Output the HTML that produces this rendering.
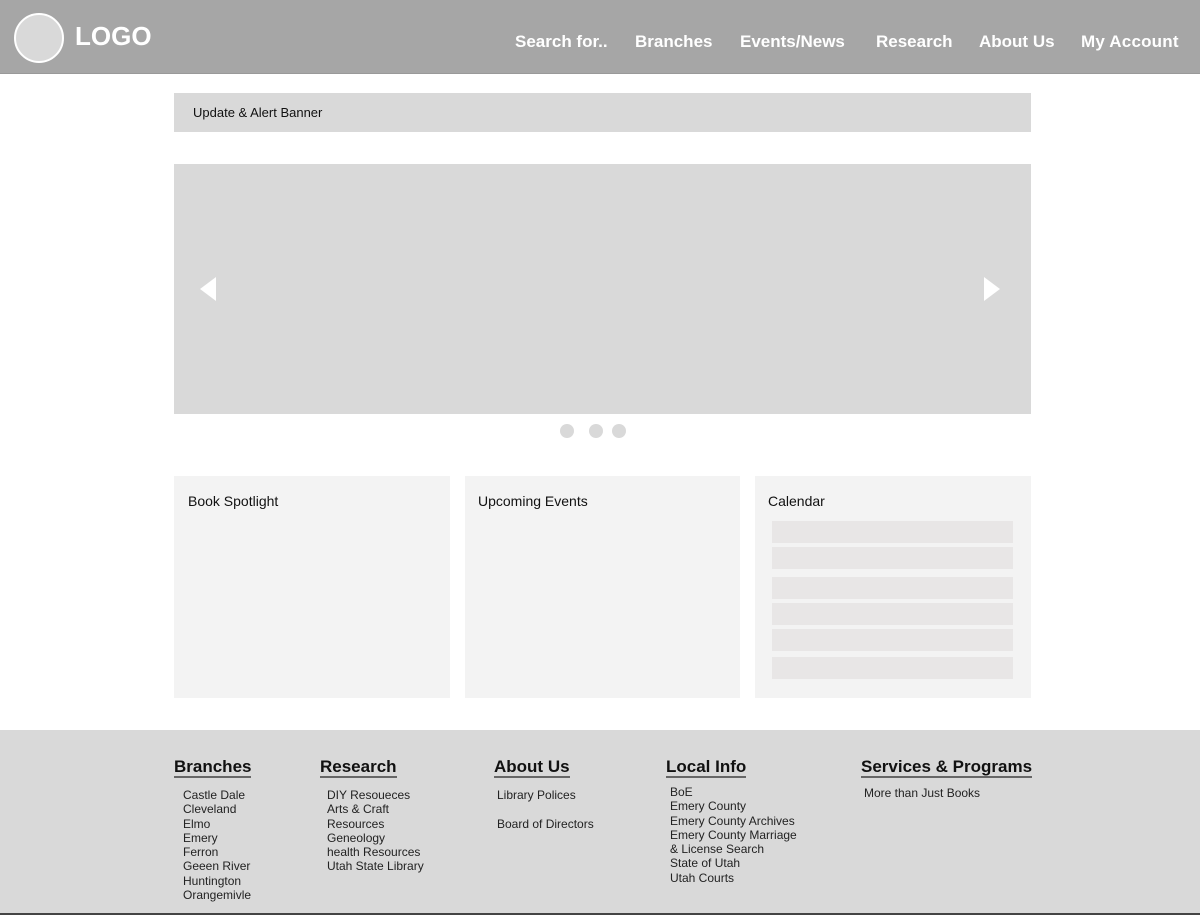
<!DOCTYPE html>
<html><head><style>
*{margin:0;padding:0;box-sizing:border-box}
body{width:1200px;height:915px;background:#fff;font-family:"Liberation Sans",sans-serif;position:relative;overflow:hidden}
.a{position:absolute}
.hdr{left:0;top:0;width:1200px;height:74px;background:#a6a6a6;border-bottom:1px solid #999}
.nav{top:32px;color:#fff;font-weight:bold;font-size:17px;white-space:nowrap}
.g{background:#d9d9d9}
.card{top:476px;height:222px;background:#f3f3f3}
.card span{position:absolute;left:14px;top:17px;font-size:14px;color:#111}
.bar{left:772px;width:241px;height:22px;background:#e8e6e6}
.h{top:758px;font-size:17px;font-weight:bold;color:#111;border-bottom:2px solid #666;line-height:18px;padding-bottom:0}
.l{font-size:12px;color:#222;line-height:14.3px;white-space:nowrap}
</style></head><body>
<div class="a hdr"></div>
<div class="a" style="left:14px;top:13px;width:50px;height:50px;border-radius:50%;background:#d9d9d9;border:2px solid #fff"></div>
<div class="a" style="left:75px;top:21px;font-size:26px;font-weight:bold;color:#fff">LOGO</div>
<div class="a nav" style="left:515px">Search for..</div>
<div class="a nav" style="left:635px">Branches</div>
<div class="a nav" style="left:740px">Events/News</div>
<div class="a nav" style="left:876px">Research</div>
<div class="a nav" style="left:979px">About Us</div>
<div class="a nav" style="left:1081px;letter-spacing:0.2px">My Account</div>
<div class="a g" style="left:174px;top:93px;width:857px;height:39px"></div>
<div class="a" style="left:193px;top:105px;font-size:13px;color:#111">Update &amp; Alert Banner</div>
<div class="a g" style="left:174px;top:164px;width:857px;height:250px"></div>
<svg class="a" style="left:198px;top:276px" width="20" height="26"><polygon points="18,1 18,25 2,13" fill="#fff"/></svg>
<svg class="a" style="left:982px;top:276px" width="20" height="26"><polygon points="2,1 2,25 18,13" fill="#fff"/></svg>
<div class="a g" style="left:560px;top:424px;width:14px;height:14px;border-radius:50%"></div>
<div class="a g" style="left:589px;top:424px;width:14px;height:14px;border-radius:50%"></div>
<div class="a g" style="left:612px;top:424px;width:14px;height:14px;border-radius:50%"></div>
<div class="a card" style="left:174px;width:276px"><span>Book Spotlight</span></div>
<div class="a card" style="left:465px;width:275px"><span style="left:13px">Upcoming Events</span></div>
<div class="a card" style="left:755px;width:276px"><span style="left:13px">Calendar</span></div>
<div class="a bar" style="top:521px"></div>
<div class="a bar" style="top:547px"></div>
<div class="a bar" style="top:577px"></div>
<div class="a bar" style="top:603px"></div>
<div class="a bar" style="top:629px"></div>
<div class="a bar" style="top:657px"></div>
<div class="a g" style="left:0;top:730px;width:1200px;height:183px"></div>
<div class="a" style="left:0;top:913px;width:1200px;height:2px;background:#444"></div>
<div class="a h" style="left:174px">Branches</div>
<div class="a h" style="left:320px">Research</div>
<div class="a h" style="left:494px">About Us</div>
<div class="a h" style="left:666px">Local Info</div>
<div class="a h" style="left:861px">Services &amp; Programs</div>
<div class="a l" style="left:183px;top:788px">Castle Dale<br>Cleveland<br>Elmo<br>Emery<br>Ferron<br>Geeen River<br>Huntington<br>Orangemivle</div>
<div class="a l" style="left:327px;top:788px">DIY Resoueces<br>Arts &amp; Craft<br>Resources<br>Geneology<br>health Resources<br>Utah State Library</div>
<div class="a l" style="left:497px;top:788px">Library Polices<br><br>Board of Directors</div>
<div class="a l" style="left:670px;top:785px">BoE<br>Emery County<br>Emery County Archives<br>Emery County Marriage<br>&amp; License Search<br>State of Utah<br>Utah Courts</div>
<div class="a l" style="left:864px;top:786px">More than Just Books</div>
</body></html>
